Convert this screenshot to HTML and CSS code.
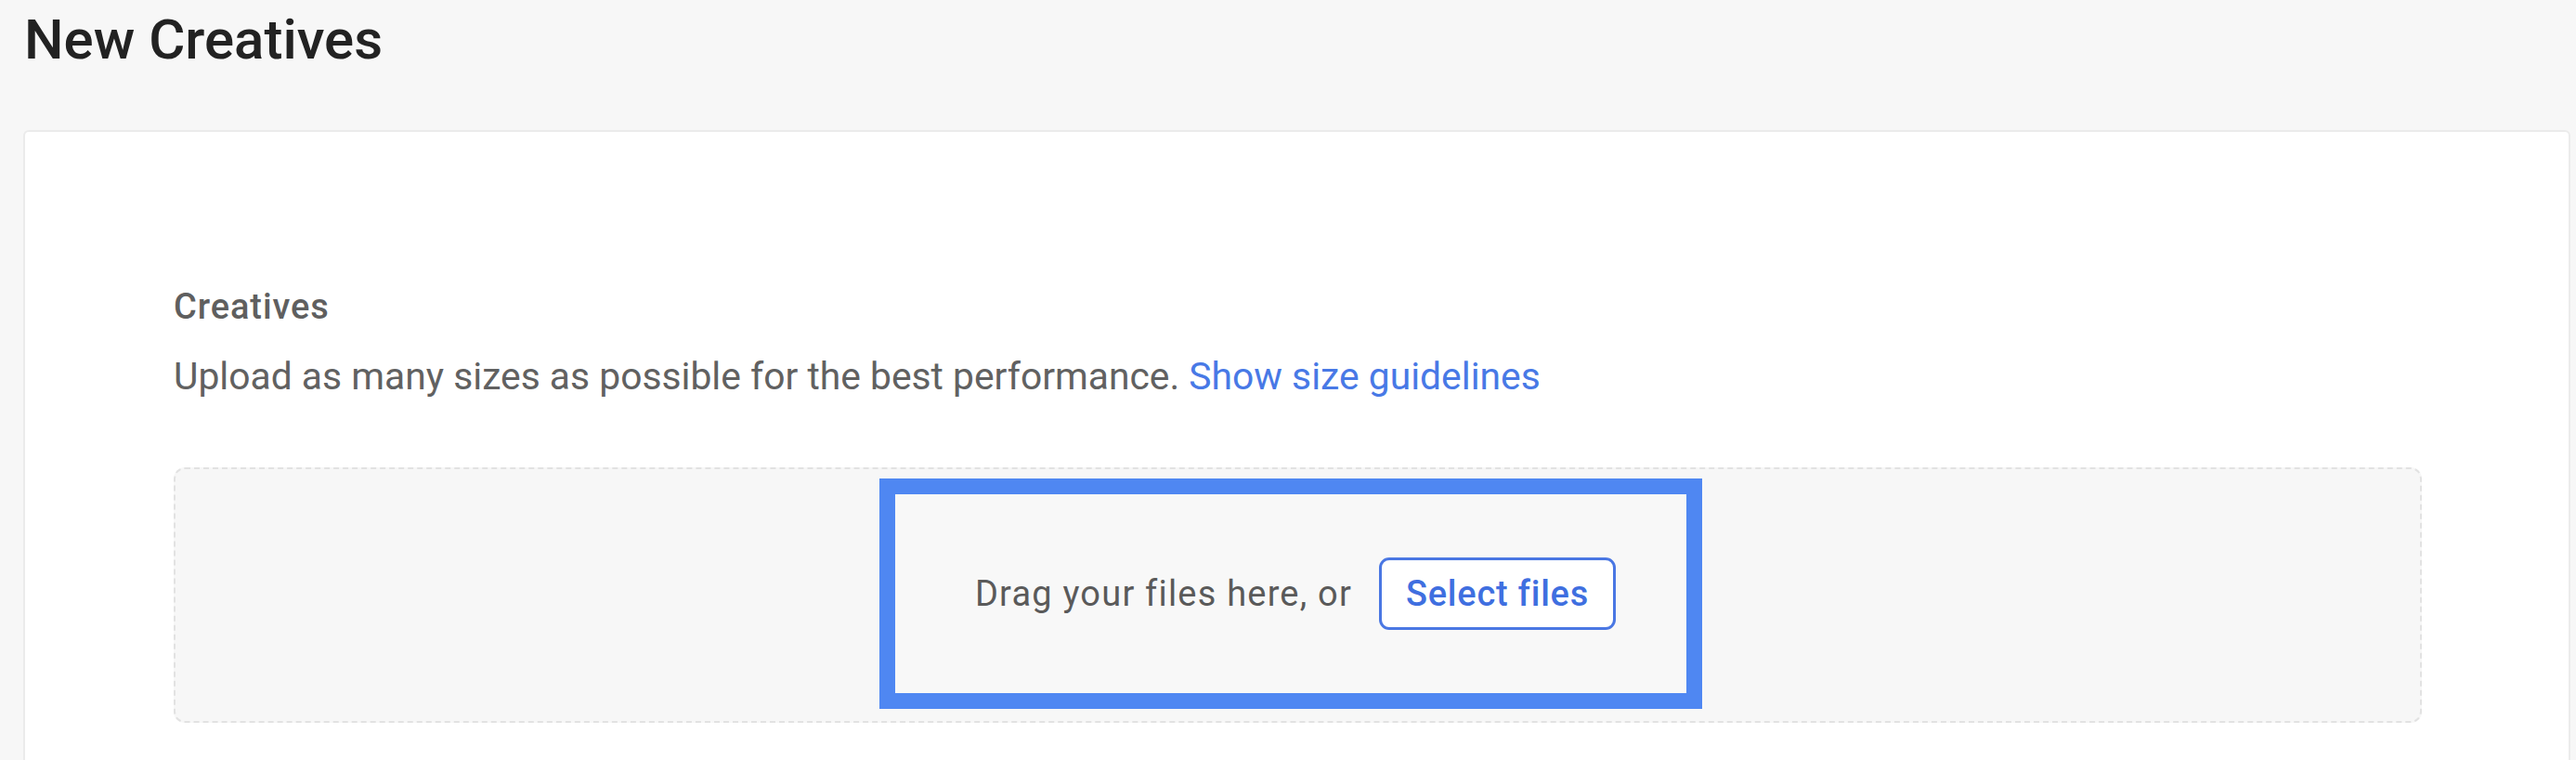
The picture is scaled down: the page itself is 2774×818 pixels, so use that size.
FILE: index.html
```html
<!DOCTYPE html>
<html lang="en">
<head>
<meta charset="utf-8">
<title>New Creatives</title>
<link rel="stylesheet" href="styles.css">
</head>
<body>
  <header class="page-header">
    <h1 class="page-title">New Creatives</h1>
  </header>
  <main class="card">
    <section class="creatives">
      <h2 class="section-label">Creatives</h2>
      <p class="section-desc">Upload as many sizes as possible for the best performance. <a class="link" href="#">Show size guidelines</a></p>
      <div class="dropzone">
        <div class="highlight">
          <span class="drop-text">Drag your files here, or</span>
          <button class="select-btn" type="button">Select files</button>
        </div>
      </div>
    </section>
  </main>
</body>
</html>
```

FILE: styles.css
```css
html, body {
  margin: 0;
  padding: 0;
  height: 100%;
  overflow: hidden;
}

body {
  background: #f7f7f7;
  font-family: Roboto, "Liberation Sans", Arial, sans-serif;
  color: #222;
}

.page-header {
  padding: 8px 0 0 26px;
}

.page-title {
  margin: 0 0 63px 0;
  font-size: 60px;
  line-height: 69px;
  font-weight: 500;
  color: #222222;
}

.card {
  margin: 0 6px 0 25px;
  min-height: 900px;
  background: #ffffff;
  border: 2px solid #ebebeb;
  border-radius: 6px;
  padding: 167px 158px 0 160px;
  box-sizing: border-box;
}

.section-label {
  margin: 0;
  font-size: 38px;
  letter-spacing: 0.9px;
  line-height: 42px;
  font-weight: 500;
  color: #5f5f5f;
}

.section-desc {
  margin: 31px 0 0 0;
  font-size: 40.8px;
  line-height: 47px;
  font-weight: 400;
  color: #616161;
}

.link {
  color: #4879e6;
  text-decoration: none;
}

.dropzone {
  margin-top: 74px;
  height: 275px;
  box-sizing: border-box;
  border: 2px dashed #e2e2e2;
  border-radius: 12px;
  background: #f7f7f7;
  display: flex;
  align-items: center;
  justify-content: center;
  padding-right: 15px;
  padding-bottom: 4px;
}

.highlight {
  width: 886px;
  height: 248px;
  box-sizing: border-box;
  border: 17px solid #4f87f2;
  background: #f8f8f8;
  display: flex;
  align-items: center;
  justify-content: center;
  gap: 29px;
  padding-left: 10px;
}

.drop-text {
  font-size: 38px;
  letter-spacing: 1.2px;
  line-height: 44px;
  color: #5a5a5a;
}

.select-btn {
  font-family: Roboto, "Liberation Sans", Arial, sans-serif;
  font-size: 38px;
  letter-spacing: 0.75px;
  line-height: 44px;
  font-weight: 500;
  color: #3f6fe0;
  background: #ffffff;
  border: 3px solid #4a77e3;
  border-radius: 11px;
  padding: 14px 26px;
  margin: 0;
  cursor: pointer;
}
```
